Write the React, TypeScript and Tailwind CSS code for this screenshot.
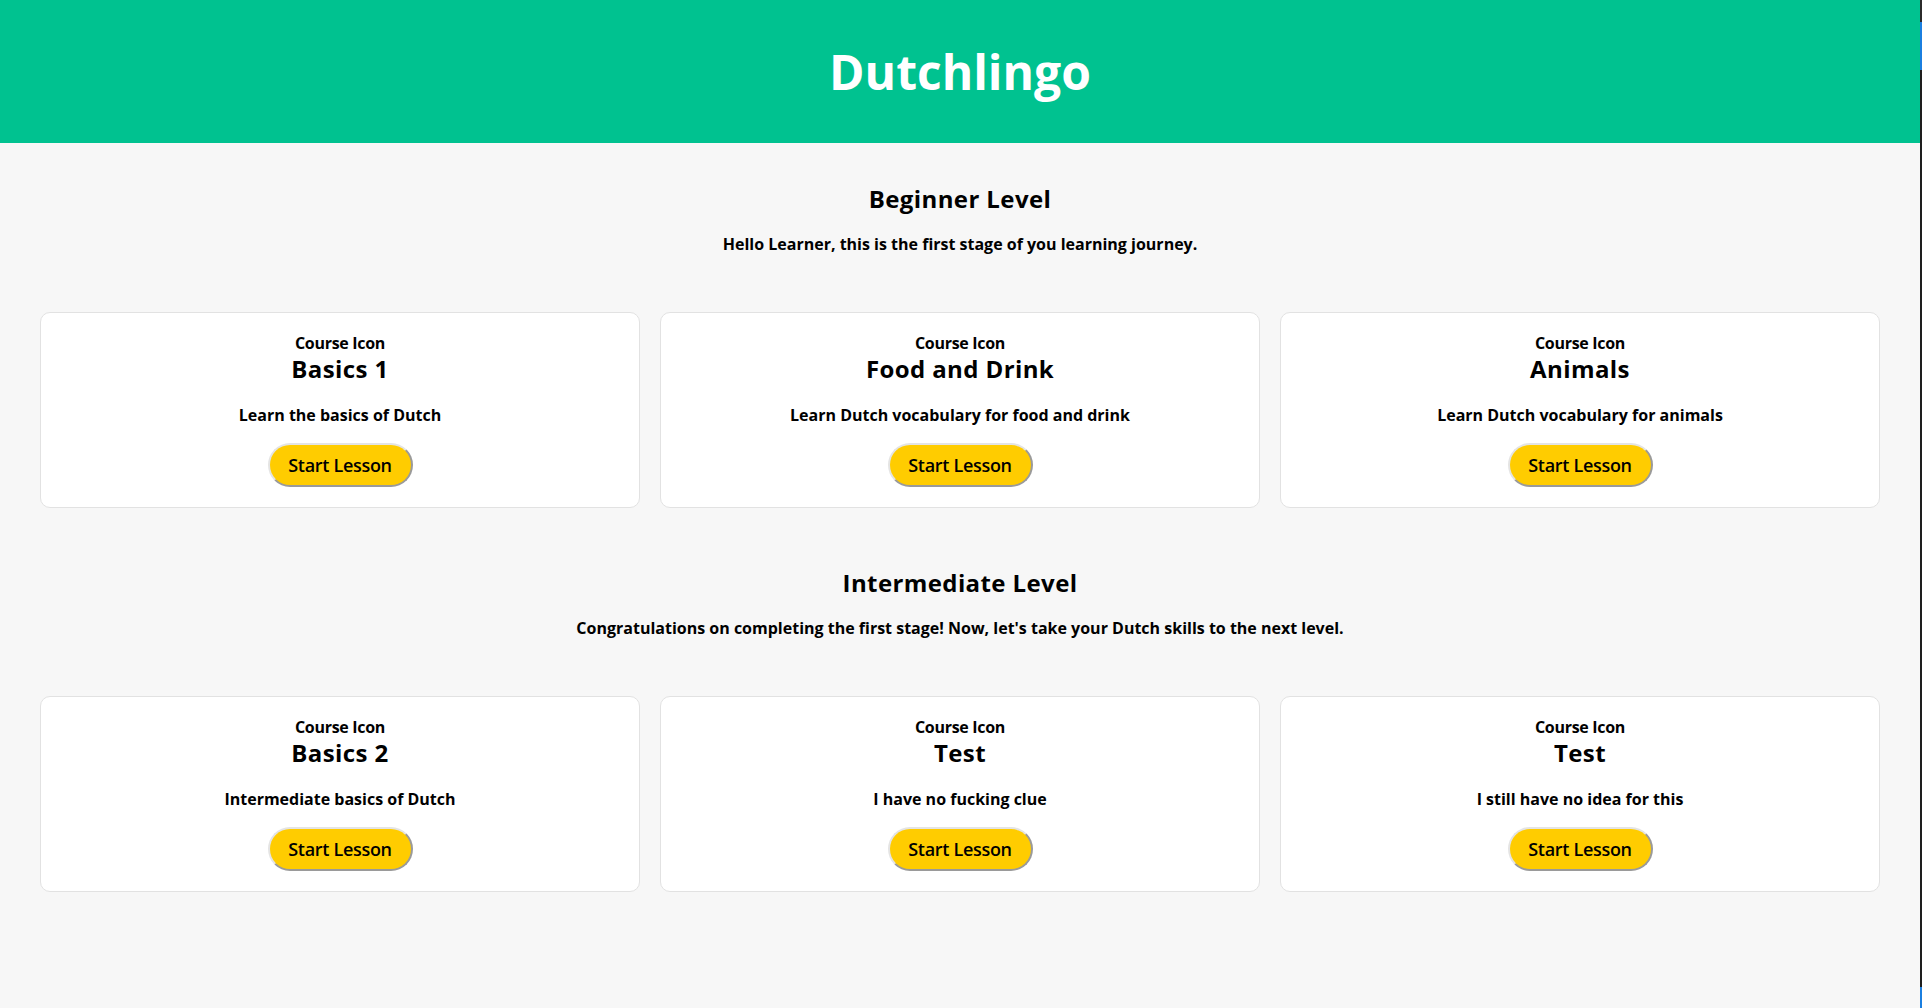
import React from 'react';

interface Course {
  title: string;
  description: string;
}

interface Level {
  name: string;
  intro: string;
  courses: Course[];
}

const levels: Level[] = [
  {
    name: 'Beginner Level',
    intro: 'Hello Learner, this is the first stage of you learning journey.',
    courses: [
      { title: 'Basics 1', description: 'Learn the basics of Dutch' },
      { title: 'Food and Drink', description: 'Learn Dutch vocabulary for food and drink' },
      { title: 'Animals', description: 'Learn Dutch vocabulary for animals' },
    ],
  },
  {
    name: 'Intermediate Level',
    intro: "Congratulations on completing the first stage! Now, let's take your Dutch skills to the next level.",
    courses: [
      { title: 'Basics 2', description: 'Intermediate basics of Dutch' },
      { title: 'Test', description: 'I have no fucking clue' },
      { title: 'Test', description: 'I still have no idea for this' },
    ],
  },
];

const CourseCard: React.FC<{ course: Course }> = ({ course }) => (
  <div className="flex flex-col items-center bg-white border border-[#e2e2e2] rounded-[10px] py-5 text-black">
    <p className="text-base leading-5 font-bold tracking-[-0.3px]">Course Icon</p>
    <h3 className="text-2xl leading-8 font-bold tracking-[0.4px]">{course.title}</h3>
    <p className="mt-[18px] text-base leading-6 font-bold">{course.description}</p>
    <button className="mt-4 h-11 w-[145px] rounded-full bg-[#ffcc00] text-lg font-semibold tracking-[-0.3px] text-black border-2 border-t-[#e4e4e4] border-l-[#e4e4e4] border-b-[#9a9a9a] border-r-[#9a9a9a]">
      Start Lesson
    </button>
  </div>
);

const LevelSection: React.FC<{ level: Level }> = ({ level }) => (
  <section className="flex flex-col items-center text-black">
    <h2 className="text-2xl leading-8 font-bold tracking-[0.4px]">{level.name}</h2>
    <p className="mt-[17px] text-base leading-6 font-bold">{level.intro}</p>
    <div className="mt-14 grid grid-cols-3 gap-5 w-full">
      {level.courses.map((c, i) => (
        <CourseCard key={i} course={c} />
      ))}
    </div>
  </section>
);

export default function App() {
  return (
    <div className="flex h-[1008px] w-[1922px] overflow-hidden" style={{ fontFamily: '"Open Sans", Lato, sans-serif' }}>
      <div className="flex-1 flex flex-col bg-[#f7f7f7]">
        <header className="h-[143px] bg-[#00c290] flex items-center justify-center">
          <h1 className="text-white text-5xl font-bold">Dutchlingo</h1>
        </header>
        <main className="px-10 pt-10 flex flex-col gap-[59px]">
          {levels.map((l) => (
            <LevelSection key={l.name} level={l} />
          ))}
        </main>
      </div>
      {/* scrollbar strip */}
      <div className="w-[2px] flex flex-col bg-[#1e1e1e]">
        <div className="h-[22px] bg-[#2b2b2b]" />
        <div className="h-12 bg-[#1b7fe0]" />
        <div className="flex-1" />
        <div className="h-[21px] bg-[#1b7fe0]" />
      </div>
    </div>
  );
}
